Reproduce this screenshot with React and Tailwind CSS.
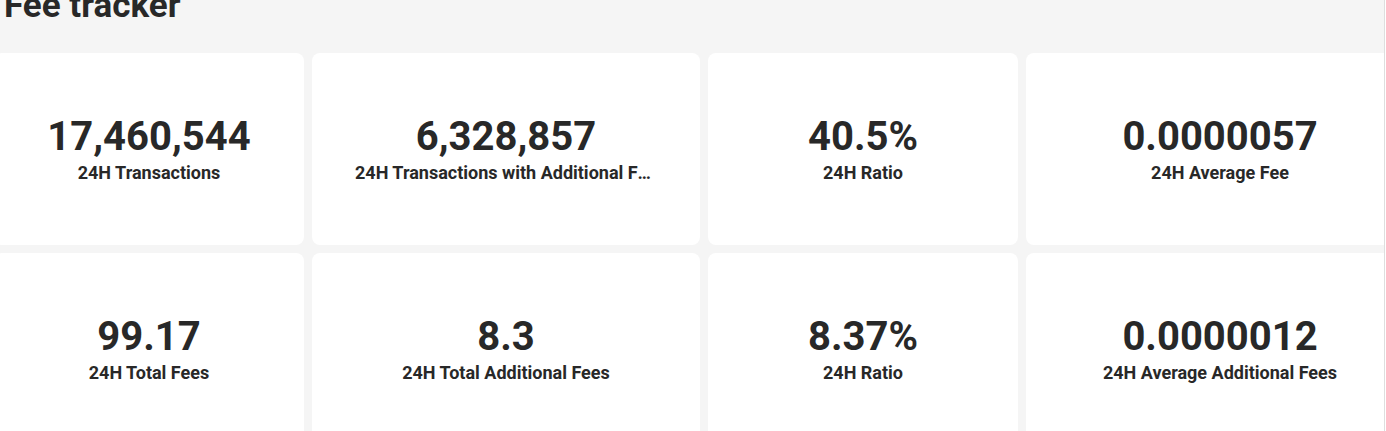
const stats = [
  { value: '17,460,544', label: '24H Transactions' },
  { value: '6,328,857', label: '24H Transactions with Additional Fees' },
  { value: '40.5%', label: '24H Ratio' },
  { value: '0.0000057', label: '24H Average Fee' },
  { value: '99.17', label: '24H Total Fees' },
  { value: '8.3', label: '24H Total Additional Fees' },
  { value: '8.37%', label: '24H Ratio' },
  { value: '0.0000012', label: '24H Average Additional Fees' },
];

const StatCard = ({ value, label }) => (
  <div className="h-[192px] bg-white rounded-lg flex flex-col items-center justify-center px-[43px] pt-[2px] min-w-0">
    <div className="text-[40px] leading-none font-bold text-[#282828]">{value}</div>
    <div className="mt-[5px] w-full text-center text-[18px] leading-[22px] font-bold text-[#282828] truncate">
      {label}
    </div>
  </div>
);

export default function App() {
  return (
    <div className="flex h-[431px] overflow-hidden bg-white" style={{ fontFamily: 'Roboto, "Liberation Sans", sans-serif' }}>
      <div className="w-[1384px] shrink-0 overflow-hidden bg-[#f5f5f5]">
        <h1 className="-mt-[14px] pl-[4px] text-[35px] leading-[40px] font-bold text-[#282828]">Fee tracker</h1>
        <div className="mt-[27px] -ml-[6px] grid grid-cols-[310px_388px_310px_388px] gap-2 w-max">
          {stats.map((s, i) => (
            <StatCard key={i} value={s.value} label={s.label} />
          ))}
        </div>
      </div>
      <div className="w-px shrink-0 bg-[#dedede]" />
    </div>
  );
}
